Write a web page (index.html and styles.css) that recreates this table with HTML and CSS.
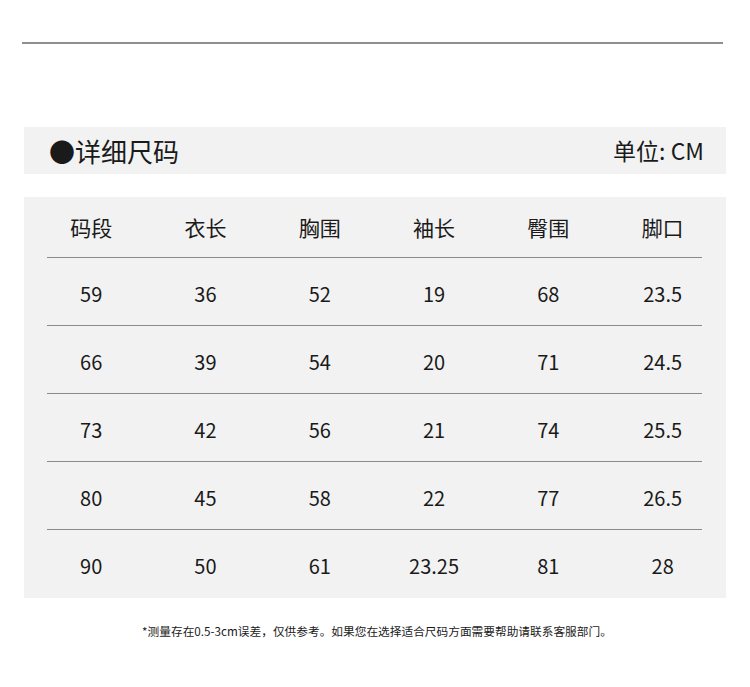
FILE: index.html
```html
<!DOCTYPE html>
<html lang="zh-CN">
<head>
<meta charset="utf-8">
<title>详细尺码</title>
<link rel="stylesheet" href="styles.css">
</head>
<body>
<div class="page">
  <div class="rule"></div>
  <div class="title-bar">
    <div class="title">●详细尺码</div>
    <div class="unit">单位: CM</div>
  </div>
  <div class="table">
    <div class="row head">
      <span>码段</span><span>衣长</span><span>胸围</span><span>袖长</span><span>臀围</span><span>脚口</span>
    </div>
    <div class="line"></div>
    <div class="row">
      <span>59</span><span>36</span><span>52</span><span>19</span><span>68</span><span>23.5</span>
    </div>
    <div class="line"></div>
    <div class="row">
      <span>66</span><span>39</span><span>54</span><span>20</span><span>71</span><span>24.5</span>
    </div>
    <div class="line"></div>
    <div class="row">
      <span>73</span><span>42</span><span>56</span><span>21</span><span>74</span><span>25.5</span>
    </div>
    <div class="line"></div>
    <div class="row">
      <span>80</span><span>45</span><span>58</span><span>22</span><span>77</span><span>26.5</span>
    </div>
    <div class="line"></div>
    <div class="row">
      <span>90</span><span>50</span><span>61</span><span>23.25</span><span>81</span><span>28</span>
    </div>
  </div>
  <p class="note">*测量存在0.5-3cm误差，仅供参考。如果您在选择适合尺码方面需要帮助请联系客服部门。</p>
</div>
</body>
</html>
```

FILE: styles.css
```css
html, body {
  margin: 0;
  padding: 0;
  background: #ffffff;
}

body {
  font-family: "Noto Sans CJK SC", "Noto Sans", sans-serif;
  color: #1a1a1a;
}

.page {
  width: 750px;
  padding-top: 42px;
}

.rule {
  height: 2px;
  margin: 0 27px 0 22px;
  background: #8f8f8f;
}

.title-bar {
  margin: 83px 24px 0 24px;
  height: 47px;
  background: #f2f2f2;
  display: flex;
  align-items: center;
  justify-content: space-between;
  padding: 0 22px 0 25px;
  box-sizing: border-box;
}

.title {
  font-size: 26px;
  line-height: 1;
}

.unit {
  font-size: 23px;
  line-height: 1;
}

.table {
  margin: 23px 24px 0 24px;
  height: 401px;
  background: #f2f2f2;
  box-sizing: border-box;
}

.row {
  display: grid;
  grid-template-columns: repeat(6, 114.3px);
  padding-left: 10px;
  height: 67px;
  align-items: center;
  padding-top: 5px;
  box-sizing: border-box;
  font-size: 20px;
  line-height: 1;
}

.row span {
  text-align: center;
}

.row.head {
  height: 60px;
  padding-top: 0;
  font-size: 21px;
}

.line {
  height: 1px;
  margin: 0 24px 0 23px;
  background: #8a8a8a;
}

.note {
  margin: 26px 0 0 0;
  padding-left: 4px;
  text-align: center;
  font-size: 11.7px;
  line-height: 14px;
  color: #1a1a1a;
}
```
